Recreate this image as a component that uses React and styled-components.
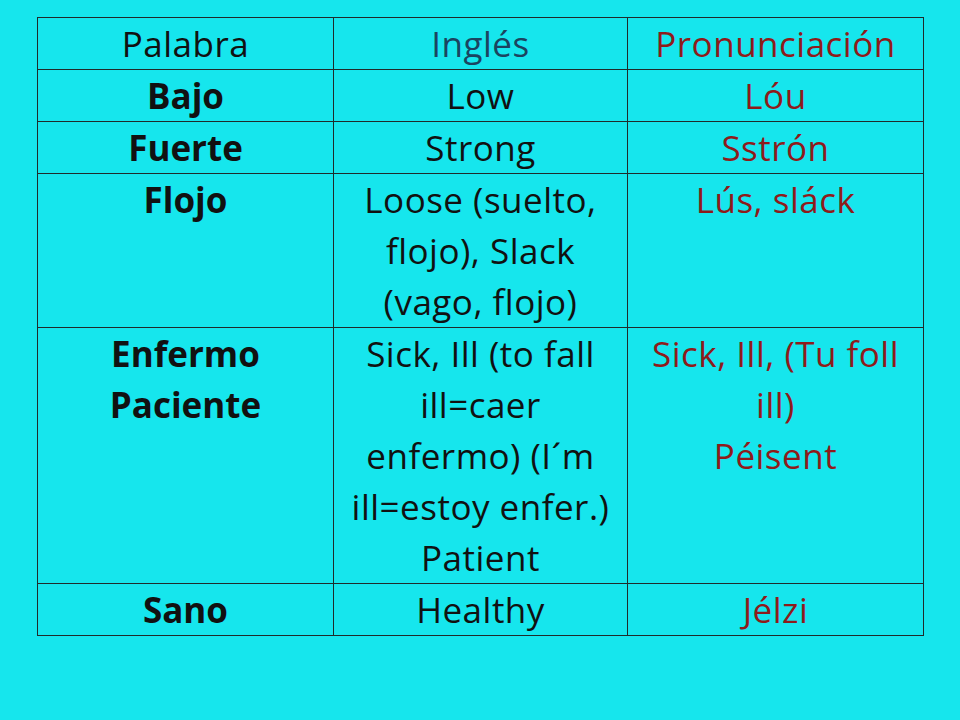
import styled, { createGlobalStyle } from "styled-components";

const GlobalStyle = createGlobalStyle`
html, body {
    margin: 0;
    padding: 0;
    background: #16e6ed;
}
`;

const Page = styled.div`
width: 960px;
height: 720px;
padding: 17px 0 0 37px;
box-sizing: border-box;
font-family: "Open Sans", Lato, sans-serif;
`;

const Table = styled.table`
border-collapse: collapse;
table-layout: fixed;
width: 886px;
`;

const Cell = styled.td`
border: 1px solid #1f2b2b;
padding: 0;
text-align: center;
vertical-align: top;
font-size: 35px;
line-height: 51px;
letter-spacing: ${props => props.bold ? "0" : "0.5px"};
white-space: nowrap;
font-weight: ${props => props.bold ? 700 : 400};
color: ${props => props.tone === "red" ? "#8e1b1b" : props.tone === "blue" ? "#1b4460" : "#111"};
`;

const rows = [
    ["Bajo", "Low", "Lóu"],
    ["Fuerte", "Strong", "Sstrón"],
    ["Flojo", ["Loose (suelto,", "flojo), Slack", "(vago, flojo)"], "Lús, sláck"],
    [["Enfermo", "Paciente"], ["Sick, Ill (to fall", "ill=caer", "enfermo) (I´m", "ill=estoy enfer.)", "Patient"], ["Sick, Ill, (Tu foll", "ill)", "Péisent"]],
    ["Sano", "Healthy", "Jélzi"],
];

function Lines({ value }) {
    if (!Array.isArray(value)) return value;
    return value.map((line, i) => <div key={i}>{line}</div>);
}

export default function App() {
    return (
        <Page>
            <GlobalStyle />
            <Table>
                <colgroup>
                    <col style={{ width: 296 }} />
                    <col style={{ width: 294 }} />
                    <col style={{ width: 296 }} />
                </colgroup>
                <tbody>
                    <tr>
                        <Cell>Palabra</Cell>
                        <Cell tone="blue">Inglés</Cell>
                        <Cell tone="red">Pronunciación</Cell>
                    </tr>
                    {rows.map((r, i) => (
                        <tr key={i}>
                            <Cell bold><Lines value={r[0]} /></Cell>
                            <Cell><Lines value={r[1]} /></Cell>
                            <Cell tone="red"><Lines value={r[2]} /></Cell>
                        </tr>
                    ))}
                </tbody>
            </Table>
        </Page>
    );
}
